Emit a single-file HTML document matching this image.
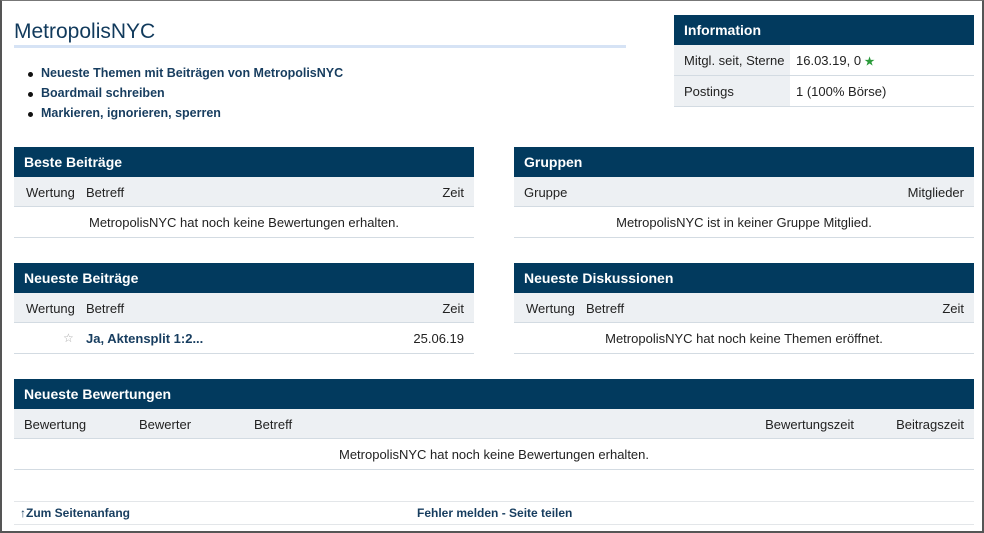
<!DOCTYPE html>
<html><head><meta charset="utf-8"><style>
*{margin:0;padding:0;box-sizing:border-box}
body{width:984px;height:533px;overflow:hidden;background:#fff;font-family:"Liberation Sans",sans-serif;font-size:13px;color:#222;position:relative}
.frame{position:absolute;left:0;top:0;width:984px;height:533px;border:2px solid #555;border-top:1px solid #777}
.a{position:absolute}
h1{position:absolute;left:14px;top:20px;font-size:21px;font-weight:normal;color:#113a5c}
.ul{left:14px;top:45px;width:612px;height:3px;background:#d6e3f5}
.li{left:41px;font-weight:bold;color:#173d5f;font-size:12.5px}
.dot{left:28px;width:5px;height:5px;border-radius:50%;background:#111}
.hd{background:#023a5e;color:#fff;font-weight:bold;font-size:14px;padding-left:10px;line-height:31px;height:30px}
.sub{background:#edf0f3;height:30px;line-height:31px;border-bottom:1px solid #d3dbe2;position:relative}
.row{height:31px;line-height:31px;border-bottom:1px solid #d3dbe2;position:relative}
.sub span,.row span{position:absolute}
.c{text-align:center}
.lnk{color:#173d5f;font-weight:bold}
.ft{font-family:"Liberation Sans",Arial,sans-serif;font-weight:bold;font-size:12px;color:#173d5f}
</style></head><body>
<div class="frame"></div>
<h1>MetropolisNYC</h1>
<div class="a ul"></div>
<div class="a dot" style="top:72px"></div><div class="a li" style="top:66px">Neueste Themen mit Beiträgen von MetropolisNYC</div>
<div class="a dot" style="top:92px"></div><div class="a li" style="top:86px">Boardmail schreiben</div>
<div class="a dot" style="top:112px"></div><div class="a li" style="top:106px">Markieren, ignorieren, sperren</div>

<div class="a" style="left:674px;top:15px;width:300px">
<div class="hd">Information</div>
<div class="row" style="height:31px"><span style="left:0;width:116px;height:30px;background:#edf0f3;padding-left:10px">Mitgl. seit, Sterne</span><span style="left:122px">16.03.19, 0 <b style="color:#2a9a3a;font-size:11px">★</b></span></div>
<div class="row" style="height:31px"><span style="left:0;width:116px;height:30px;background:#edf0f3;padding-left:10px">Postings</span><span style="left:122px">1 (100% Börse)</span></div>
</div>

<div class="a" style="left:14px;top:147px;width:460px">
<div class="hd">Beste Beiträge</div>
<div class="sub"><span style="left:12px">Wertung</span><span style="left:72px">Betreff</span><span style="right:10px">Zeit</span></div>
<div class="row c">MetropolisNYC hat noch keine Bewertungen erhalten.</div>
</div>
<div class="a" style="left:514px;top:147px;width:460px">
<div class="hd">Gruppen</div>
<div class="sub"><span style="left:10px">Gruppe</span><span style="right:10px">Mitglieder</span></div>
<div class="row c">MetropolisNYC ist in keiner Gruppe Mitglied.</div>
</div>

<div class="a" style="left:14px;top:263px;width:460px">
<div class="hd">Neueste Beiträge</div>
<div class="sub"><span style="left:12px">Wertung</span><span style="left:72px">Betreff</span><span style="right:10px">Zeit</span></div>
<div class="row"><span style="left:49px;color:#aaa;font-size:12px">☆</span><span class="lnk" style="left:72px">Ja, Aktensplit 1:2...</span><span style="right:10px">25.06.19</span></div>
</div>
<div class="a" style="left:514px;top:263px;width:460px">
<div class="hd">Neueste Diskussionen</div>
<div class="sub"><span style="left:12px">Wertung</span><span style="left:72px">Betreff</span><span style="right:10px">Zeit</span></div>
<div class="row c">MetropolisNYC hat noch keine Themen eröffnet.</div>
</div>

<div class="a" style="left:14px;top:379px;width:960px">
<div class="hd">Neueste Bewertungen</div>
<div class="sub"><span style="left:10px">Bewertung</span><span style="left:125px">Bewerter</span><span style="left:240px">Betreff</span><span style="right:120px">Bewertungszeit</span><span style="right:10px">Beitragszeit</span></div>
<div class="row c">MetropolisNYC hat noch keine Bewertungen erhalten.</div>
</div>

<div class="a" style="left:14px;top:501px;width:960px;height:24px;border-top:1px solid #e3e6e9;border-bottom:1px solid #e3e6e9"></div>
<div class="a ft" style="left:20px;top:506px">↑Zum Seitenanfang</div>
<div class="a ft" style="left:417px;top:506px">Fehler melden - Seite teilen</div>
</body></html>
